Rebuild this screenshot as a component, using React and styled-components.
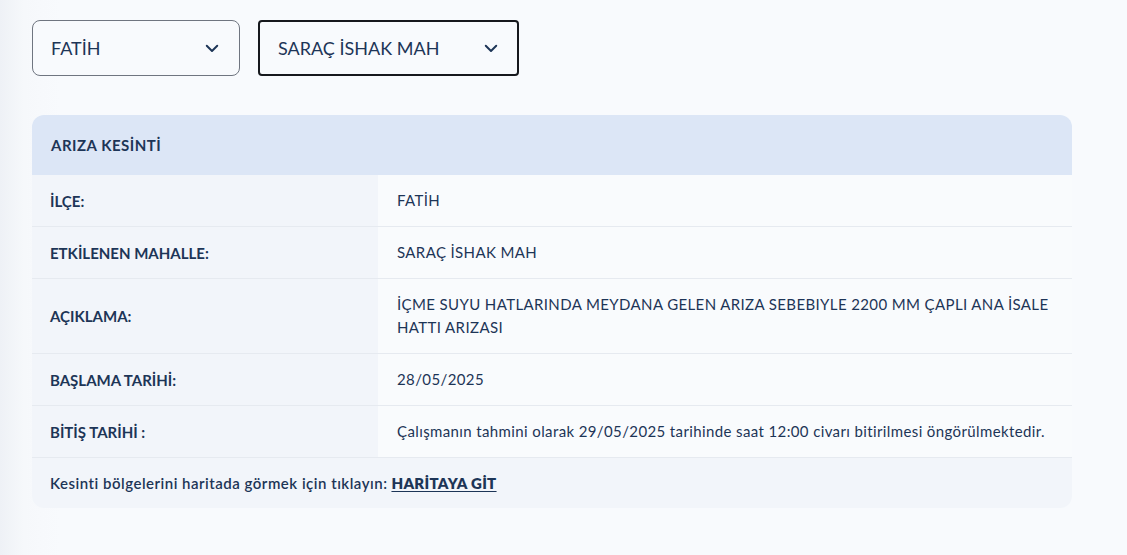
import React from "react";
import styled, { createGlobalStyle } from "styled-components";

const Global = createGlobalStyle`
  html, body { margin: 0; padding: 0; }
  body {
    background: linear-gradient(90deg, #eef1f6 0px, #f6f8fb 24px, #f8fafd 60px);
    font-family: Lato, "Noto Sans", sans-serif;
    color: #1d3557;
    min-height: 555px;
  }
`;

const Page = styled.div`
  padding: 20px 55px 40px 32px;
  display: flex;
  flex-direction: column;
  gap: 39px;
`;

const Filters = styled.div`
  display: flex;
  gap: 18px;
`;

const Select = styled.div`
  box-sizing: border-box;
  height: 56px;
  width: ${(p) => p.$w}px;
  display: flex;
  align-items: center;
  justify-content: space-between;
  padding: 0 ${(p) => (p.$active ? 17 : 18)}px 0 18px;
  border: ${(p) => (p.$active ? "2px solid #16181d" : "1px solid #6f7580")};
  border-radius: ${(p) => (p.$active ? 4 : 8)}px;
  background: #f8fafd;
  font-size: 18px;
  color: #1d3557;
`;

const Chevron = () => (
  <svg width="18" height="18" viewBox="0 0 24 24" fill="none" stroke="#1d3557" strokeWidth="2.6" strokeLinecap="round" strokeLinejoin="round">
    <path d="M5 9l7 7 7-7" />
  </svg>
);

const Card = styled.div`
  width: 1040px;
  border-radius: 12px;
  overflow: hidden;
  background: #f9fbfd;
`;

const Header = styled.div`
  height: 60px;
  display: flex;
  align-items: center;
  padding-left: 19px;
  background: #dce6f6;
  font-size: 15px;
  font-weight: 700;
  letter-spacing: 0.5px;
  color: #1d3557;
`;

const Row = styled.div`
  display: grid;
  grid-template-columns: 346px 1fr;
  min-height: 51px;
  border-bottom: 1px solid #e6eaf0;
`;

const Label = styled.div`
  display: flex;
  align-items: center;
  padding: 0 18px;
  background: #f2f5fa;
  font-size: 15px;
  font-weight: 700;
  color: #1d3557;
`;

const Value = styled.div`
  display: flex;
  align-items: center;
  padding: 14px 19px;
  background: #f9fbfd;
  font-size: 15px;
  line-height: 23px;
  letter-spacing: 0.38px;
  color: #1d3557;
`;

const Footer = styled.div`
  height: 50px;
  display: flex;
  align-items: center;
  padding-left: 18px;
  background: #f2f5fa;
  font-size: 15px;
  font-weight: 600;
  letter-spacing: 0.5px;
  color: #1d3557;
`;

const MapLink = styled.a`
  margin-left: 4px;
  color: #1d3557;
  font-weight: 800;
  letter-spacing: 0.3px;
  text-decoration: underline;
  text-underline-offset: 2px;
`;

const rows = [
  ["İLÇE:", "FATİH"],
  ["ETKİLENEN MAHALLE:", "SARAÇ İSHAK MAH"],
  ["AÇIKLAMA:", "İÇME SUYU HATLARINDA MEYDANA GELEN ARIZA SEBEBIYLE 2200 MM ÇAPLI ANA İSALE HATTI ARIZASI"],
  ["BAŞLAMA TARİHİ:", "28/05/2025"],
  ["BİTİŞ TARİHİ :", "Çalışmanın tahmini olarak 29/05/2025 tarihinde saat 12:00 civarı bitirilmesi öngörülmektedir."],
];

export default function App() {
  return (
    <>
      <Global />
      <Page>
        <Filters>
          <Select $w={208}>
            <span>FATİH</span>
            <Chevron />
          </Select>
          <Select $w={261} $active>
            <span>SARAÇ İSHAK MAH</span>
            <Chevron />
          </Select>
        </Filters>
        <Card>
          <Header>ARIZA KESİNTİ</Header>
          {rows.map(([l, v]) => (
            <Row key={l}>
              <Label>{l}</Label>
              <Value>{v}</Value>
            </Row>
          ))}
          <Footer>
            Kesinti bölgelerini haritada görmek için tıklayın:
            <MapLink href="#">HARİTAYA GİT</MapLink>
          </Footer>
        </Card>
      </Page>
    </>
  );
}
